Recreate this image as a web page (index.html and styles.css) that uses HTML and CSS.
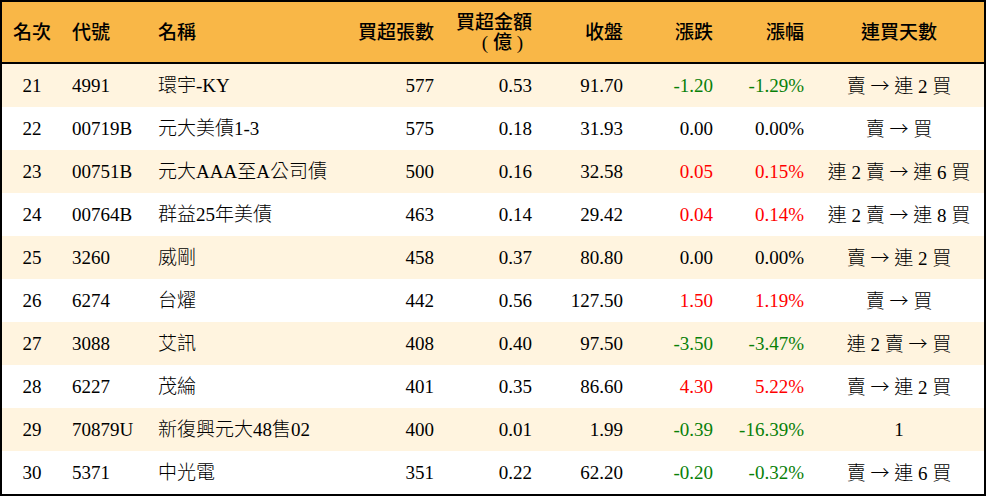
FILE: index.html
```html
<!DOCTYPE html>
<html lang="zh-Hant">
<head>
<meta charset="utf-8">
<link rel="stylesheet" href="styles.css">
</head>
<body>
<div class="frame">
<table class="rank">
  <colgroup>
    <col class="c1"><col class="c2"><col class="c3"><col class="c4"><col class="c5"><col class="c6"><col class="c7"><col class="c8"><col class="c9">
  </colgroup>
  <thead>
    <tr>
      <th class="ctr">名次</th>
      <th class="lft">代號</th>
      <th class="lft">名稱</th>
      <th class="rgt">買超張數</th>
      <th class="rgt">買超金額<br><span class="paren">(&nbsp;億&nbsp;)</span></th>
      <th class="rgt">收盤</th>
      <th class="rgt">漲跌</th>
      <th class="rgt">漲幅</th>
      <th class="ctr">連買天數</th>
    </tr>
  </thead>
  <tbody>
    <tr class="odd"><td class="ctr">21</td><td class="lft">4991</td><td class="lft">環宇-KY</td><td class="rgt">577</td><td class="rgt">0.53</td><td class="rgt">91.70</td><td class="rgt down">-1.20</td><td class="rgt down">-1.29%</td><td class="ctr">賣 <span class="arr">→</span> 連 2 買</td></tr>
    <tr><td class="ctr">22</td><td class="lft">00719B</td><td class="lft">元大美債1-3</td><td class="rgt">575</td><td class="rgt">0.18</td><td class="rgt">31.93</td><td class="rgt">0.00</td><td class="rgt">0.00%</td><td class="ctr">賣 <span class="arr">→</span> 買</td></tr>
    <tr class="odd"><td class="ctr">23</td><td class="lft">00751B</td><td class="lft">元大AAA至A公司債</td><td class="rgt">500</td><td class="rgt">0.16</td><td class="rgt">32.58</td><td class="rgt up">0.05</td><td class="rgt up">0.15%</td><td class="ctr">連 2 賣 <span class="arr">→</span> 連 6 買</td></tr>
    <tr><td class="ctr">24</td><td class="lft">00764B</td><td class="lft">群益25年美債</td><td class="rgt">463</td><td class="rgt">0.14</td><td class="rgt">29.42</td><td class="rgt up">0.04</td><td class="rgt up">0.14%</td><td class="ctr">連 2 賣 <span class="arr">→</span> 連 8 買</td></tr>
    <tr class="odd"><td class="ctr">25</td><td class="lft">3260</td><td class="lft">威剛</td><td class="rgt">458</td><td class="rgt">0.37</td><td class="rgt">80.80</td><td class="rgt">0.00</td><td class="rgt">0.00%</td><td class="ctr">賣 <span class="arr">→</span> 連 2 買</td></tr>
    <tr><td class="ctr">26</td><td class="lft">6274</td><td class="lft">台燿</td><td class="rgt">442</td><td class="rgt">0.56</td><td class="rgt">127.50</td><td class="rgt up">1.50</td><td class="rgt up">1.19%</td><td class="ctr">賣 <span class="arr">→</span> 買</td></tr>
    <tr class="odd"><td class="ctr">27</td><td class="lft">3088</td><td class="lft">艾訊</td><td class="rgt">408</td><td class="rgt">0.40</td><td class="rgt">97.50</td><td class="rgt down">-3.50</td><td class="rgt down">-3.47%</td><td class="ctr">連 2 賣 <span class="arr">→</span> 買</td></tr>
    <tr><td class="ctr">28</td><td class="lft">6227</td><td class="lft">茂綸</td><td class="rgt">401</td><td class="rgt">0.35</td><td class="rgt">86.60</td><td class="rgt up">4.30</td><td class="rgt up">5.22%</td><td class="ctr">賣 <span class="arr">→</span> 連 2 買</td></tr>
    <tr class="odd"><td class="ctr">29</td><td class="lft">70879U</td><td class="lft">新復興元大48售02</td><td class="rgt">400</td><td class="rgt">0.01</td><td class="rgt">1.99</td><td class="rgt down">-0.39</td><td class="rgt down">-16.39%</td><td class="ctr">1</td></tr>
    <tr><td class="ctr">30</td><td class="lft">5371</td><td class="lft">中光電</td><td class="rgt">351</td><td class="rgt">0.22</td><td class="rgt">62.20</td><td class="rgt down">-0.20</td><td class="rgt down">-0.32%</td><td class="ctr">賣 <span class="arr">→</span> 連 6 買</td></tr>
  </tbody>
</table>
</div>
</body>
</html>
```
FILE: styles.css
```css
html, body {
  margin: 0;
  padding: 0;
  background: #ffffff;
}
.frame {
  width: 982px;
  border: 2px solid #000;
}
.rank {
  width: 982px;
  border-collapse: separate;
  border-spacing: 0;
  table-layout: fixed;
  font-family: "Liberation Serif", "Noto Sans CJK TC", serif;
  font-size: 19px;
  color: #000;
}
.c1 { width: 60px; }
.c2 { width: 86px; }
.c3 { width: 196px; }
.c4 { width: 100px; }
.c5 { width: 98px; }
.c6 { width: 91px; }
.c7 { width: 90px; }
.c8 { width: 91px; }
.c9 { width: 170px; }
.rank th {
  background: #f9b747;
  height: 58px;
  border-bottom: 2px solid #000;
  font-weight: 500;
  line-height: 20px;
  padding: 2px 10px 0;
  white-space: nowrap;
  vertical-align: middle;
}
.paren {
  padding-right: 9px;
}
.rank td {
  height: 42px;
  padding: 1px 10px 0;
  white-space: nowrap;
  line-height: 20px;
  vertical-align: middle;
  font-weight: 300;
}
.rank tbody tr td { background: #ffffff; }
.rank tbody tr.odd td { background: #fff4df; }
.ctr { text-align: center; }
.lft { text-align: left; }
.rgt { text-align: right; }
.rank th.ctr, .rank td.ctr { padding-left: 0; padding-right: 0; }
.arr {
  font-family: "Noto Sans CJK TC", sans-serif;
  font-weight: 300;
}
.up { color: #ff0000; }
.down { color: #088008; }
```
